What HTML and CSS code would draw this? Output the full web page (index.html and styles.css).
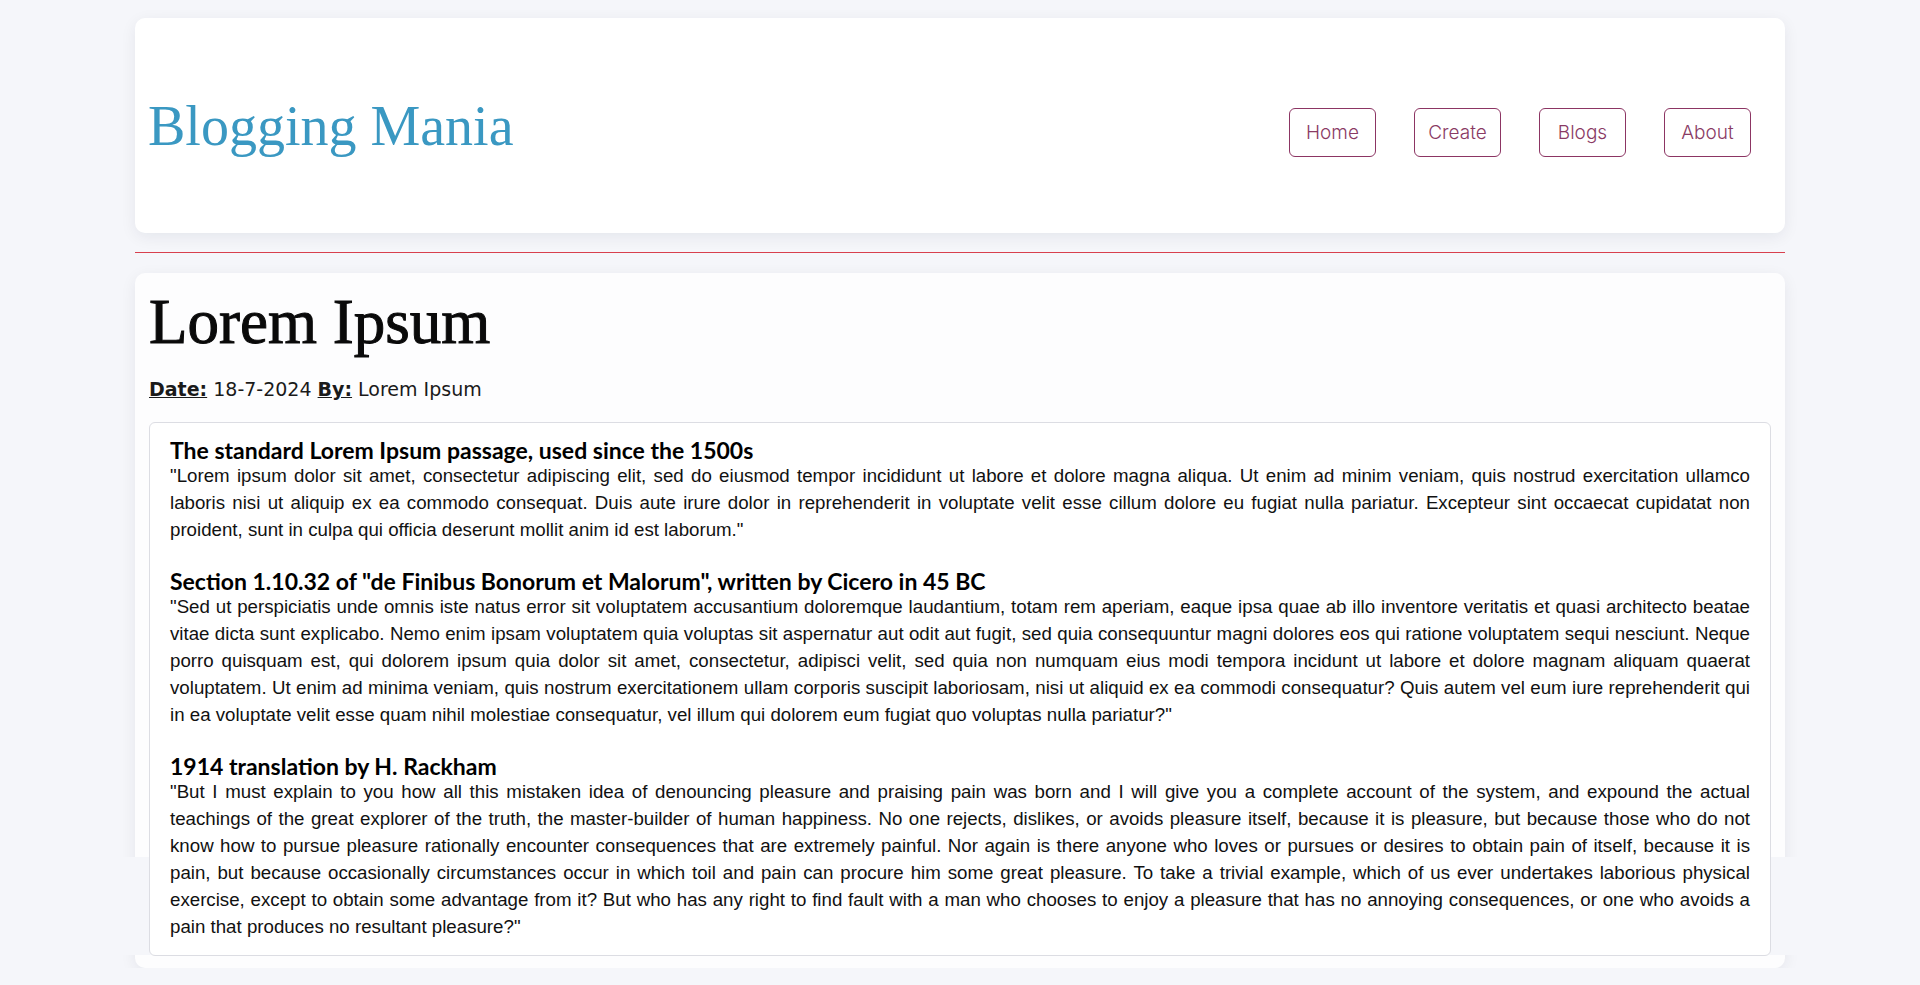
FILE: index.html
```html
<!DOCTYPE html>
<html lang="en">
<head>
<meta charset="utf-8">
<title>Blogging Mania</title>
<link rel="stylesheet" href="styles.css">
</head>
<body>
<div class="page">
  <header class="card header">
    <div class="logo">Blogging Mania</div>
    <nav class="nav">
      <a class="nav-btn" href="#">Home</a>
      <a class="nav-btn" href="#">Create</a>
      <a class="nav-btn" href="#">Blogs</a>
      <a class="nav-btn" href="#">About</a>
    </nav>
  </header>
  <div class="rule"></div>
  <main class="card post">
    <h1 class="post-title">Lorem Ipsum</h1>
    <div class="meta"><b class="label">Date:</b> 18-7-2024 <b class="label">By:</b> Lorem Ipsum</div>
    <article class="content">
      <h3 class="sec-title">The standard Lorem Ipsum passage, used since the 1500s</h3>
      <p class="sec-text">"Lorem ipsum dolor sit amet, consectetur adipiscing elit, sed do eiusmod tempor incididunt ut labore et dolore magna aliqua. Ut enim ad minim veniam, quis nostrud exercitation ullamco laboris nisi ut aliquip ex ea commodo consequat. Duis aute irure dolor in reprehenderit in voluptate velit esse cillum dolore eu fugiat nulla pariatur. Excepteur sint occaecat cupidatat non proident, sunt in culpa qui officia deserunt mollit anim id est laborum."</p>
      <h3 class="sec-title">Section 1.10.32 of "de Finibus Bonorum et Malorum", written by Cicero in 45 BC</h3>
      <p class="sec-text">"Sed ut perspiciatis unde omnis iste natus error sit voluptatem accusantium doloremque laudantium, totam rem aperiam, eaque ipsa quae ab illo inventore veritatis et quasi architecto beatae vitae dicta sunt explicabo. Nemo enim ipsam voluptatem quia voluptas sit aspernatur aut odit aut fugit, sed quia consequuntur magni dolores eos qui ratione voluptatem sequi nesciunt. Neque porro quisquam est, qui dolorem ipsum quia dolor sit amet, consectetur, adipisci velit, sed quia non numquam eius modi tempora incidunt ut labore et dolore magnam aliquam quaerat voluptatem. Ut enim ad minima veniam, quis nostrum exercitationem ullam corporis suscipit laboriosam, nisi ut aliquid ex ea commodi consequatur? Quis autem vel eum iure reprehenderit qui in ea voluptate velit esse quam nihil molestiae consequatur, vel illum qui dolorem eum fugiat quo voluptas nulla pariatur?"</p>
      <h3 class="sec-title">1914 translation by H. Rackham</h3>
      <p class="sec-text">"But I must explain to you how all this mistaken idea of denouncing pleasure and praising pain was born and I will give you a complete account of the system, and expound the actual teachings of the great explorer of the truth, the master-builder of human happiness. No one rejects, dislikes, or avoids pleasure itself, because it is pleasure, but because those who do not know how to pursue pleasure rationally encounter consequences that are extremely painful. Nor again is there anyone who loves or pursues or desires to obtain pain of itself, because it is pain, but because occasionally circumstances occur in which toil and pain can procure him some great pleasure. To take a trivial example, which of us ever undertakes laborious physical exercise, except to obtain some advantage from it? But who has any right to find fault with a man who chooses to enjoy a pleasure that has no annoying consequences, or one who avoids a pain that produces no resultant pleasure?"</p>
    </article>
  </main>
</div>
</body>
</html>
```

FILE: styles.css
```css
html, body {
  margin: 0;
  padding: 0;
}
body {
  background: #f5f6fa;
  font-family: "Liberation Sans", Arial, sans-serif;
  color: #111;
}
.page {
  width: 1650px;
  margin: 0 auto;
  padding-top: 18px;
}
.card {
  background: #ffffff;
  border-radius: 10px;
  box-shadow: 0 4px 16px rgba(20, 30, 60, 0.07);
}
.header {
  height: 215px;
  display: flex;
  align-items: center;
  justify-content: space-between;
  padding: 0 34px 0 13px;
  box-sizing: border-box;
}
.logo {
  font-family: "Liberation Serif", "Times New Roman", serif;
  font-size: 56px;
  color: #3a98c2;
  line-height: 1;
}
.nav {
  display: flex;
  gap: 38px;
  margin-top: 13px;
}
.nav-btn {
  width: 87px;
  height: 49px;
  box-sizing: border-box;
  display: flex;
  align-items: center;
  justify-content: center;
  border: 1px solid #8c3563;
  border-radius: 6px;
  color: #8a3a64;
  text-decoration: none;
  font-family: Inter, "Noto Sans", sans-serif;
  font-size: 19px;
  font-weight: 300;
  background: #fff;
}
.rule {
  height: 1px;
  background: #d8404e;
  margin: 19px 0 20px;
}
.post {
  position: relative;
  padding: 14px 14px 12px 14px;
  background: #fdfdfe;
}
.post::after {
  content: "";
  position: absolute;
  left: -40px;
  right: -40px;
  top: 584px;
  height: 98px;
  background: #f5f6fa;
}
.post-title {
  margin: 0;
  font-family: "Liberation Serif", "Times New Roman", serif;
  font-weight: normal;
  font-size: 63px;
  line-height: 70px;
  color: #0a0a0a;
  -webkit-text-stroke: 1px #0a0a0a;
}
.meta {
  margin: 21px 0 22px;
  font-family: "DejaVu Sans", Verdana, sans-serif;
  font-size: 19px;
  line-height: 22px;
  color: #1a1a1a;
}
.label {
  text-decoration: underline;
}
.content {
  position: relative;
  z-index: 1;
  background: #fff;
  border: 1px solid #dcdde3;
  border-radius: 6px;
  padding: 16px 20px 15px;
}
.sec-title {
  margin: 0;
  font-family: Lato, "Open Sans", sans-serif;
  font-weight: 700;
  font-size: 23px;
  line-height: 23px;
  color: #000;
}
.sec-text {
  margin: 0 0 27px;
  font-family: "Liberation Sans", Arial, sans-serif;
  font-size: 18.7px;
  line-height: 27px;
  text-align: justify;
  color: #111;
}
.sec-text:last-child {
  margin-bottom: 0;
}
```
